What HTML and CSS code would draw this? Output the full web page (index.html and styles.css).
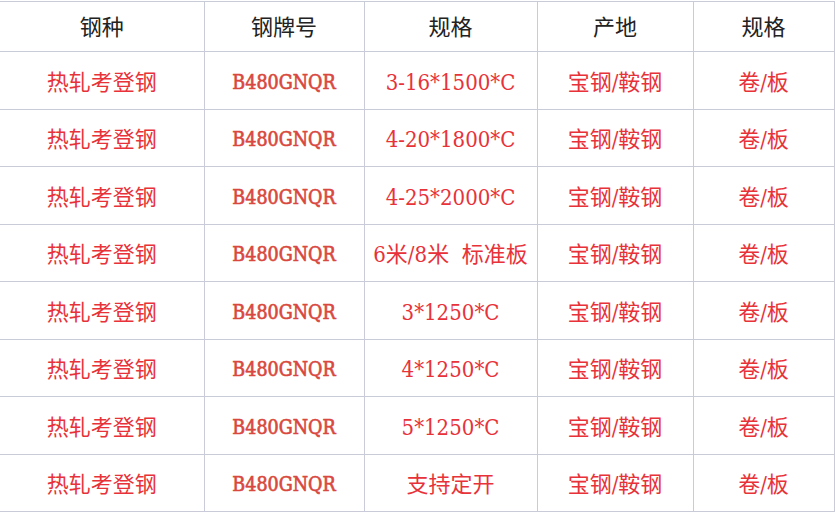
FILE: index.html
```html
<!DOCTYPE html>
<html lang="zh-CN">
<head>
<meta charset="utf-8">
<title>钢材规格</title>
<link rel="stylesheet" href="styles.css">
</head>
<body>
<div class="wrap">
<table class="steel">
  <colgroup>
    <col class="c1"><col class="c2"><col class="c3"><col class="c4"><col class="c5">
  </colgroup>
  <thead>
    <tr><th>钢种</th><th>钢牌号</th><th>规格</th><th>产地</th><th>规格</th></tr>
  </thead>
  <tbody>
    <tr><td>热轧考登钢</td><td class="grade">B480GNQR</td><td class="spec">3-16*1500*C</td><td>宝钢/鞍钢</td><td>卷/板</td></tr>
    <tr><td>热轧考登钢</td><td class="grade">B480GNQR</td><td class="spec">4-20*1800*C</td><td>宝钢/鞍钢</td><td>卷/板</td></tr>
    <tr><td>热轧考登钢</td><td class="grade">B480GNQR</td><td class="spec">4-25*2000*C</td><td>宝钢/鞍钢</td><td>卷/板</td></tr>
    <tr><td>热轧考登钢</td><td class="grade">B480GNQR</td><td class="spec">6米/8米&nbsp;&nbsp;标准板</td><td>宝钢/鞍钢</td><td>卷/板</td></tr>
    <tr><td>热轧考登钢</td><td class="grade">B480GNQR</td><td class="spec">3*1250*C</td><td>宝钢/鞍钢</td><td>卷/板</td></tr>
    <tr><td>热轧考登钢</td><td class="grade">B480GNQR</td><td class="spec">4*1250*C</td><td>宝钢/鞍钢</td><td>卷/板</td></tr>
    <tr><td>热轧考登钢</td><td class="grade">B480GNQR</td><td class="spec">5*1250*C</td><td>宝钢/鞍钢</td><td>卷/板</td></tr>
    <tr><td>热轧考登钢</td><td class="grade">B480GNQR</td><td class="spec">支持定开</td><td>宝钢/鞍钢</td><td>卷/板</td></tr>
  </tbody>
</table>
</div>
</body>
</html>
```

FILE: styles.css
```css
html, body {
  margin: 0;
  padding: 0;
  background: #ffffff;
}
.wrap {
  padding-top: 1px;
}
.steel {
  border-collapse: collapse;
  table-layout: fixed;
  width: 834px;
  font-family: "DejaVu Serif Condensed", "DejaVu Serif", "Noto Sans CJK SC", serif;
  font-size: 22px;
  line-height: 30px;
}
.c1 { width: 204px; }
.c2 { width: 160px; }
.c3 { width: 173px; }
.c4 { width: 156px; }
.c5 { width: 141px; }
.steel th,
.steel td {
  border: 1px solid #c9ccd8;
  text-align: center;
  vertical-align: middle;
  padding: 0;
  white-space: nowrap;
}
.steel tr > :first-child {
  border-left: none;
}
.steel th {
  height: 46px;
  padding-top: 3px;
  font-weight: normal;
  color: #222222;
}
.steel td {
  height: 51.5px;
  color: #e8323a;
  padding-top: 5px;
}
.steel td.grade {
  color: #d9483e;
  font-size: 19.5px;
  -webkit-text-stroke: 0.6px #d9483e;
}
```
